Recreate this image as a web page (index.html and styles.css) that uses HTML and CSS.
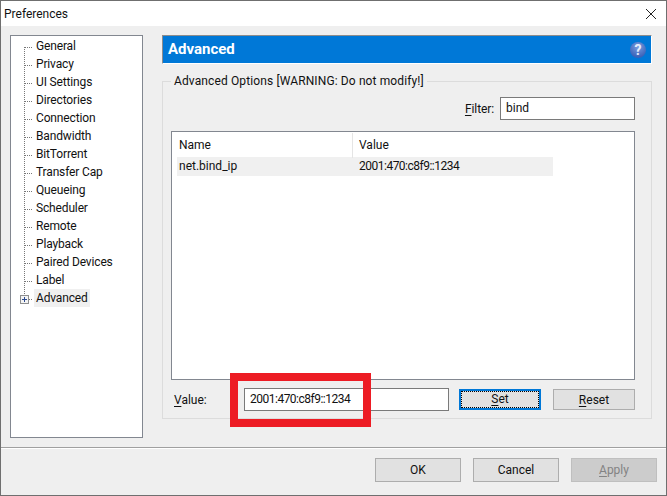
FILE: index.html
```html
<!DOCTYPE html>
<html lang="en">
<head>
<meta charset="utf-8">
<title>Preferences</title>
<link rel="stylesheet" href="styles.css">
</head>
<body>
<div class="window">
  <div class="titlebar">
    <span>Preferences</span>
    <svg class="close" width="10" height="10" viewBox="0 0 10 10"><path d="M0 0L10 10M10 0L0 10" stroke="#222" stroke-width="1" fill="none"/></svg>
  </div>
  <div class="main">
    <ul class="tree">
      <li class="node first"><span class="label">General</span></li>
      <li class="node"><span class="label">Privacy</span></li>
      <li class="node"><span class="label">UI Settings</span></li>
      <li class="node"><span class="label">Directories</span></li>
      <li class="node"><span class="label">Connection</span></li>
      <li class="node"><span class="label">Bandwidth</span></li>
      <li class="node"><span class="label">BitTorrent</span></li>
      <li class="node"><span class="label">Transfer Cap</span></li>
      <li class="node"><span class="label">Queueing</span></li>
      <li class="node"><span class="label">Scheduler</span></li>
      <li class="node"><span class="label">Remote</span></li>
      <li class="node"><span class="label">Playback</span></li>
      <li class="node"><span class="label">Paired Devices</span></li>
      <li class="node"><span class="label">Label</span></li>
      <li class="node last">
        <svg class="expander" width="9" height="9" viewBox="0 0 9 9"><rect x="0.5" y="0.5" width="8" height="8" fill="#f4f4f4" stroke="#8e8f8f"/><path d="M2 4.5H7M4.5 2V7" stroke="#2b4a8f" fill="none"/></svg>
        <span class="label selected">Advanced</span>
      </li>
    </ul>
    <div class="pane">
      <div class="header">
        <span>Advanced</span>
        <span class="help">?</span>
      </div>
      <fieldset class="group">
        <legend>Advanced Options [WARNING: Do not modify!]</legend>
        <div class="filter-row">
          <span class="caption"><u>F</u>ilter:</span>
          <div class="field filter-field">bind</div>
        </div>
        <div class="list">
          <div class="list-head">
            <div class="col name">Name</div>
            <div class="col">Value</div>
          </div>
          <div class="list-row">
            <div class="col">net.bind_ip</div>
            <div class="col address">2001:470:c8f9::1234</div>
          </div>
        </div>
        <div class="value-row">
          <span class="value-label"><u>V</u>alue:</span>
          <div class="field value-field address">2001:470:c8f9::1234<div class="callout"></div></div>
          <div class="btn small default"><span class="focus"><u>S</u>et</span></div>
          <div class="btn small"><span><u>R</u>eset</span></div>
        </div>
      </fieldset>
    </div>
  </div>
  <div class="footer">
    <div class="btn wide">OK</div>
    <div class="btn wide">Cancel</div>
    <div class="btn wide disabled"><span><u>A</u>pply</span></div>
  </div>
</div>
</body>
</html>
```
FILE: styles.css
```css
* { box-sizing: border-box; }
html, body { margin: 0; padding: 0; }
body { width: 667px; height: 496px; overflow: hidden; font: 12px/16px Roboto, "Noto Sans", sans-serif; color: #111; }
u { text-underline-offset: 2px; }
.address { letter-spacing: -0.5px; }

.window { width: 667px; height: 496px; border: 1px solid #6f6f6f; background: #efefef; display: flex; flex-direction: column; }

.titlebar { height: 25px; flex: none; background: #fff; display: flex; align-items: center; justify-content: space-between; padding: 0 10px 0 3px; }

.main { flex: 1; display: flex; gap: 19px; padding: 9px 14px 0 9px; min-height: 0; }

.tree { list-style: none; margin: 0 0 9px; padding: 1px 0 0; width: 133px; background: #fff; border: 1px solid #828790; }
.node {
  height: 18px; padding-left: 25px; display: flex; align-items: center; position: relative;
  background:
    repeating-linear-gradient(to bottom, #777 0 1px, transparent 1px 2px) no-repeat 13px 0 / 1px 100%,
    repeating-linear-gradient(to right, #777 0 1px, transparent 1px 2px) no-repeat 14px 10px / 8px 1px;
}
.node.first { background:
    repeating-linear-gradient(to bottom, #777 0 1px, transparent 1px 2px) no-repeat 13px 10px / 1px 8px,
    repeating-linear-gradient(to right, #777 0 1px, transparent 1px 2px) no-repeat 14px 10px / 8px 1px; }
.node.last { background:
    repeating-linear-gradient(to bottom, #777 0 1px, transparent 1px 2px) no-repeat 13px 0 / 1px 6px,
    repeating-linear-gradient(to right, #777 0 1px, transparent 1px 2px) no-repeat 18px 10px / 4px 1px; }
.label { display: block; height: 18px; line-height: 18px; padding: 0 2px; margin-left: -2px; white-space: nowrap; letter-spacing: -0.15px; }
.selected { background: #f0f0f0; }
.expander { position: absolute; left: 9px; top: 6px; }

.pane { width: 490px; display: flex; flex-direction: column; }
.header { height: 29px; flex: none; background: #0078d7; color: #fff; font-size: 15px; line-height: 24px; font-weight: 700; padding: 0 6px 2px 5px; display: flex; align-items: center; justify-content: space-between; border: 1px solid; border-color: #8c8c8c #fff #fff #8c8c8c; }
.help { width: 16px; height: 16px; border-radius: 50%; background: radial-gradient(circle at 50% 30%, #7d9ee0, #3a62b8 75%); color: #e6edfa; font-size: 14px; font-weight: 700; line-height: 16px; text-align: center; margin: 3px -1px 0 0; }

.group { margin: 9px 0 0; padding: 8px 16px 6px 8px; min-width: 0; height: 346px; border: 1px solid #dcdcdc; }
.group legend { padding: 0 3px; height: 16px; white-space: nowrap; letter-spacing: 0.12px; }

.filter-row { height: 23px; display: flex; justify-content: flex-end; align-items: center; gap: 6px; }
.caption { letter-spacing: -0.1px; }
.field { height: 23px; background: #fff; border: 1px solid #7a7a7a; line-height: 21px; padding-left: 5px; }
.filter-field { width: 135px; }

.list { height: 249px; margin-top: 11px; background: #fff; border: 1px solid #828790; padding: 1px 0 0 5px; }
.list-head, .list-row { display: grid; grid-template-columns: 176px 200px; }
.list-head { height: 23px; }
.list-head .col { line-height: 25px; }
.list-head .name { border-right: 1px solid #e5e5e5; }
.list-row { height: 19px; line-height: 19px; margin-top: 1px; background: #f0f0f0; width: 376px; }
.col { padding-left: 2px; }
.col + .col { padding-left: 6px; }

.value-row { height: 23px; margin-top: 8px; display: flex; align-items: center; }
.value-label { width: 73px; padding: 1px 0 0 3px; }
.value-field { width: 205px; position: relative; }
.callout { position: absolute; left: -15px; top: -16px; width: 141px; height: 54px; border: 8px solid #ed1c24; }

.btn { background: #e1e1e1; border: 1px solid #adadad; display: flex; align-items: center; justify-content: center; }
.small { width: 82px; height: 21px; margin-left: 12px; }
.small.default { margin-left: 10px; border: 2px solid #0078d7; padding: 0; }
.focus { width: 100%; height: 100%; border: 1px dotted #000; display: block; text-align: center; line-height: 15px; }

.footer { height: 48px; flex: none; border-top: 1px solid #a0a0a0; box-shadow: inset 0 1px 0 #fff; padding: 10px 9px 0 0; display: flex; justify-content: flex-end; gap: 12px; }
.wide { width: 86px; height: 24px; }
.disabled { background: #ccc; border-color: #bfbfbf; color: #838383; }
```
